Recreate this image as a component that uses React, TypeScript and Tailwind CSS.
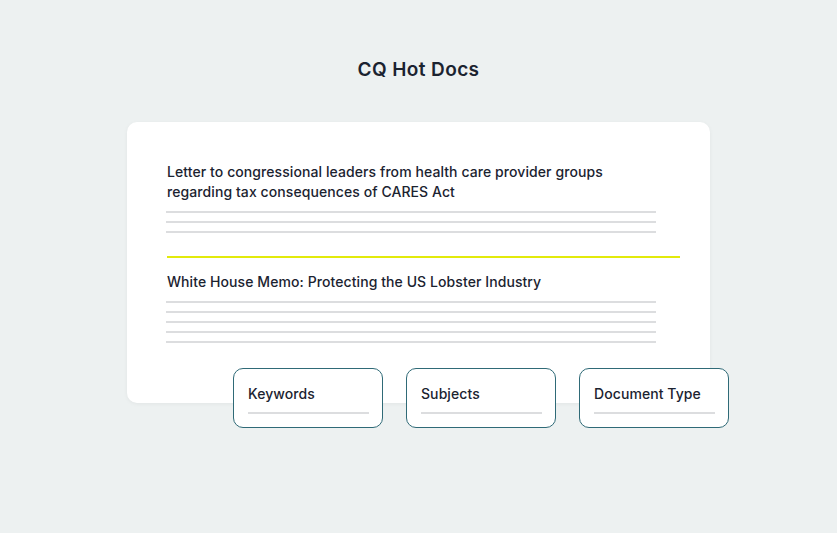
export default function App() {
  const docs = [
    {
      title: (
        <>
          Letter to congressional leaders from health care provider groups
          <br />
          regarding tax consequences of CARES Act
        </>
      ),
      lines: 3,
    },
    { title: <>White House Memo: Protecting the US Lobster Industry</>, lines: 5 },
  ];
  const filters = ['Keywords', 'Subjects', 'Document Type'];

  return (
    <div className="w-[837px] h-[533px] bg-[#edf1f1] font-['Inter',sans-serif] text-[#1b2330]">
      <h1 className="pt-[58px] text-center text-[19px] leading-[24px] font-semibold tracking-[0.4px]">CQ Hot Docs</h1>

      <div className="ml-[127px] mt-[40px] w-[583px] h-[281px] rounded-[10px] bg-white shadow-[0_1px_4px_rgba(0,0,0,0.05)] pl-[40px] pt-[40px]">
        {docs.map((d, i) => (
          <div key={i}>
            {i > 0 && <div className="mt-[23px] mb-[14px] h-[1.5px] w-[513px] bg-[#e2ea0b]" />}
            <p className="text-[14px] leading-[20px] font-medium tracking-[0.08px]">{d.title}</p>
            <div className="mt-[9px] flex flex-col gap-[8px] -ml-px">
              {Array.from({ length: d.lines }).map((_, j) => (
                <div key={j} className="h-[2px] w-[490px] bg-[#dcdddf]" />
              ))}
            </div>
          </div>
        ))}
      </div>

      <div className="ml-[233px] -mt-[35px] flex gap-[23px]">
        {filters.map((f) => (
          <div key={f} className="w-[150px] h-[60px] rounded-[10px] border border-[#2f6a77] bg-white pl-[14px] pr-[13px] pt-[15px]">
            <div className="text-[14px] leading-[20px] font-medium tracking-[0.08px]">{f}</div>
            <div className="mt-[8px] h-[2px] bg-[#dcdddf]" />
          </div>
        ))}
      </div>
    </div>
  );
}
